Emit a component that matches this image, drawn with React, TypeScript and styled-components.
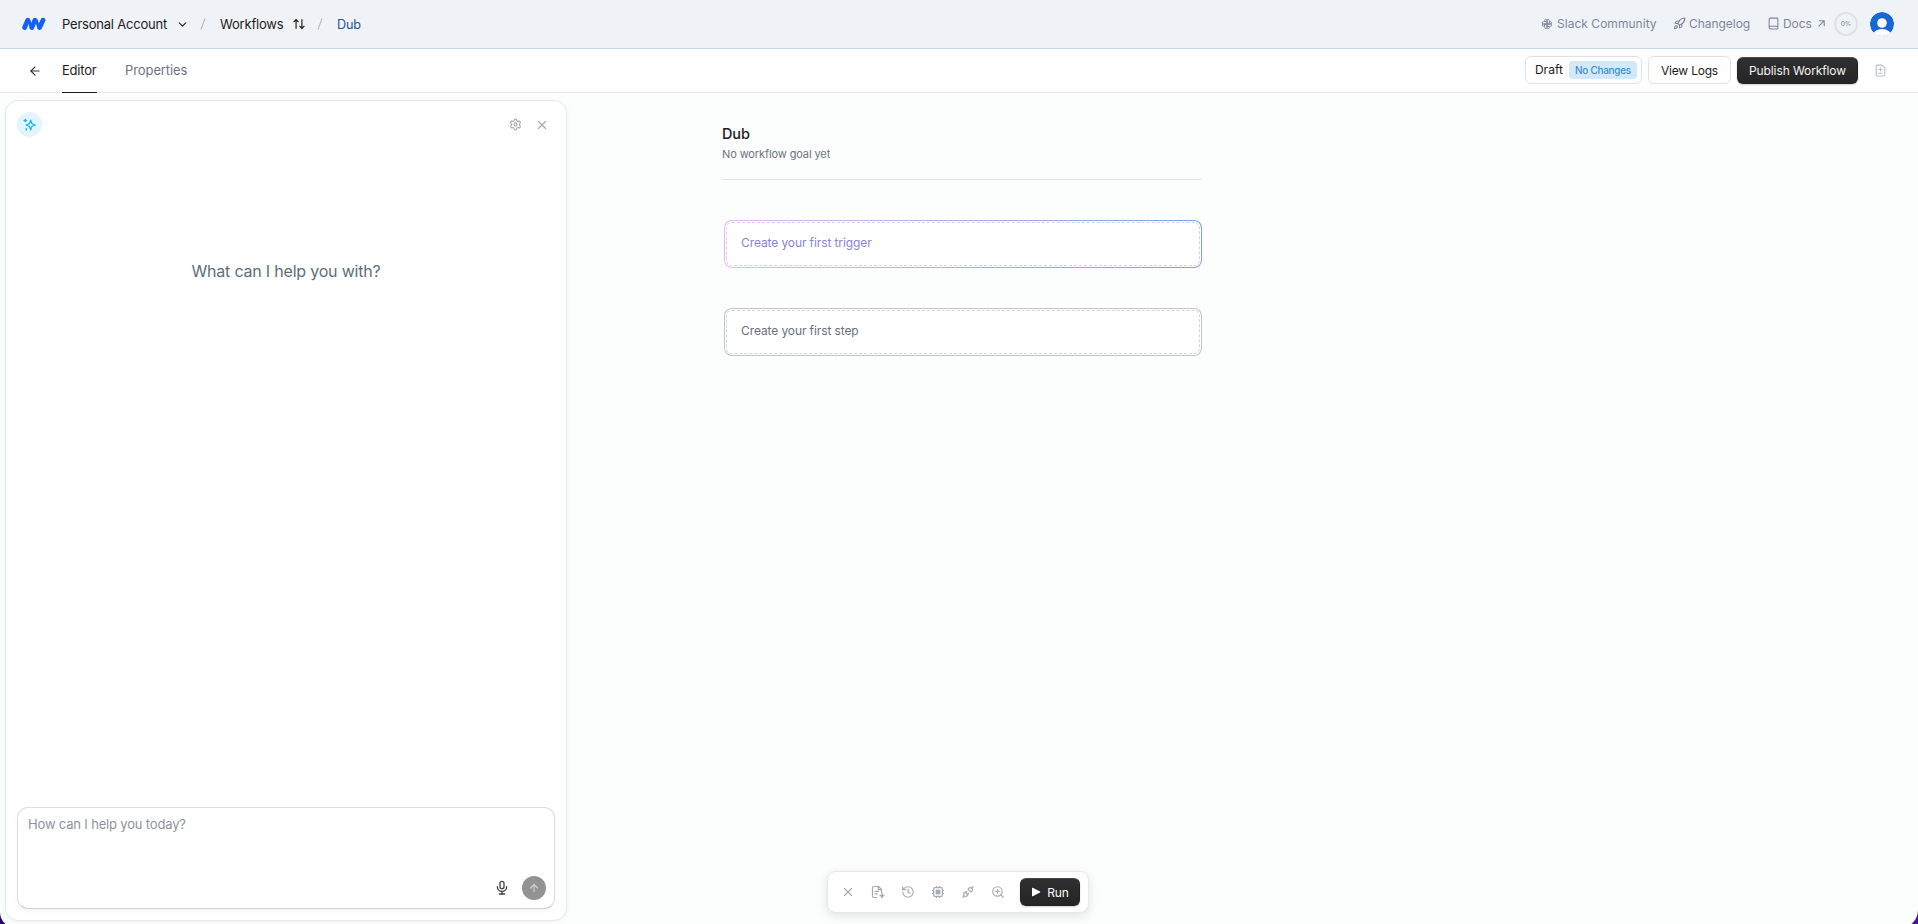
import React from "react";
import styled, { createGlobalStyle, css } from "styled-components";
import { ArrowLeft, ArrowUp, Book, ChevronDown, FileDiff, History, Rocket, Settings, X, ZoomIn } from "lucide-react";
import { RiArrowRightUpLine, RiArrowUpDownLine } from "react-icons/ri";
import { TbBrandSlack, TbMicrophone, TbPlugConnected } from "react-icons/tb";

const GlobalStyle = createGlobalStyle`
  * { box-sizing: border-box; }
  body { margin: 0; overflow: hidden; font-family: Inter, "Liberation Sans", sans-serif; color: #1c1c1c; }
  svg { display: block; flex: none; }
  button { font: inherit; color: inherit; letter-spacing: inherit; }
`;

const Screen = styled.div`
  height: 924px;
  overflow: hidden;
  background: linear-gradient(90deg, #27036c, #43109f);
`;

const Shell = styled.div`
  display: flex;
  flex-direction: column;
  height: 928px;
  background: #fbfefd;
  border-radius: 0 0 18px 16px;
  overflow: hidden;
`;

const Label = styled.span<{ $size?: number; $track?: number; $color?: string; $weight?: number }>`
  font-size: ${(p) => p.$size ?? 12}px;
  letter-spacing: ${(p) => p.$track ?? 0}px;
  color: ${(p) => p.$color ?? "#1c1c1c"};
  font-weight: ${(p) => p.$weight ?? 400};
  white-space: nowrap;
`;

const TopBar = styled.header`
  display: flex;
  align-items: center;
  justify-content: space-between;
  height: 49px;
  flex: none;
  padding: 0 24px 0 22px;
  background: #eff2f6;
  border-bottom: 1px solid #c7d5e6;
`;

const Crumbs = styled.nav`
  display: flex;
  align-items: center;
  height: 100%;
`;

const Logo = styled.svg`
  margin-right: 16px;
`;

const CrumbLink = styled.a<{ $width: number }>`
  display: flex;
  align-items: center;
  justify-content: space-between;
  width: ${(p) => p.$width}px;
`;

const Slash = styled.svg`
  margin: 0 14px 0 11px;
`;

const TopLinks = styled.div`
  display: flex;
  align-items: center;
  padding-bottom: 1px;
`;

const TopLink = styled.a<{ $width: number }>`
  display: flex;
  align-items: center;
  gap: 3px;
  width: ${(p) => p.$width}px;
  color: #7e8799;
`;

const Progress = styled.div`
  display: grid;
  place-items: center;
  width: 24px;
  height: 24px;
  margin-right: 12px;
  border: 2px solid #dfe2e5;
  border-radius: 50%;
`;

const SubBar = styled.div`
  display: flex;
  justify-content: space-between;
  height: 44px;
  flex: none;
  padding: 0 31px 0 28px;
  background: #fff;
  border-bottom: 1px solid #e5e7e9;
`;

const Tabs = styled.div`
  display: flex;
  align-items: center;
  height: 44px;
  color: #333;
`;

const Tab = styled.a<{ $active?: boolean }>`
  display: flex;
  align-items: center;
  height: 44px;
  margin-left: ${(p) => (p.$active ? 20 : 28.5)}px;
  padding-bottom: 2px;
  border-bottom: 1px solid ${(p) => (p.$active ? "#1c1c1c" : "transparent")};
`;

const Actions = styled.div`
  display: flex;
  align-items: center;
  height: 42px;
  gap: 6px;
`;

const darkSurface = css`
  background: linear-gradient(#303030, #252525);
  border: 1px solid #222;
  border-top-color: #484848;
  box-shadow: 0 1px 2px rgba(20, 20, 40, 0.2);
`;

const ActionButton = styled.button<{ $width: number; $height?: number; $dark?: boolean }>`
  display: flex;
  align-items: center;
  justify-content: center;
  gap: 6px;
  width: ${(p) => p.$width}px;
  height: ${(p) => p.$height ?? 28}px;
  padding: 0;
  background: #fff;
  border: 1px solid #e0e2e5;
  border-radius: 6px;
  ${(p) => p.$dark && darkSurface}
`;

const DraftButton = styled(ActionButton)`
  justify-content: flex-end;
  padding: 0 4px 1px 0;
`;

const Badge = styled.span`
  display: flex;
  align-items: center;
  justify-content: center;
  width: 68px;
  height: 18px;
  background: #d3e9f9;
  border-radius: 4px;
`;

const FileAction = styled.span`
  margin-left: 10px;
  color: #b9bec5;
`;

const Body = styled.main`
  display: flex;
  flex: 1;
  padding: 7px 0 7px 5px;
`;

const Assistant = styled.aside`
  display: flex;
  flex-direction: column;
  width: 562px;
  padding: 11px;
  background: #fff;
  border: 1px solid #e5e8ea;
  border-radius: 13px;
  box-shadow: 0 1px 5px rgba(30, 50, 60, 0.05);
`;

const AssistantHead = styled.div`
  display: flex;
  align-items: center;
  gap: 13px;
  padding-right: 6px;
  color: #a3a9b2;
`;

const SparkBadge = styled.div`
  display: grid;
  place-items: center;
  width: 25px;
  height: 25px;
  margin-right: auto;
  background: #e3f4fc;
  border-radius: 50%;
`;

const Greeting = styled.div`
  flex: 1;
  padding-top: 124px;
  text-align: center;
`;

const Composer = styled.div`
  display: flex;
  flex-direction: column;
  justify-content: space-between;
  height: 102px;
  padding: 8px 8px 8px 10px;
  border: 1px solid #dcdee1;
  border-bottom-color: #cdcfd1;
  border-radius: 11px;
  box-shadow: 0 2px 4px rgba(20, 30, 40, 0.05);
`;

const ComposerActions = styled.div`
  display: flex;
  align-items: center;
  justify-content: flex-end;
  gap: 12px;
  color: #444;
`;

const Send = styled.button`
  display: grid;
  place-items: center;
  width: 24px;
  height: 24px;
  padding: 0;
  border: 0;
  border-radius: 50%;
  background: #939393;
  color: #d0d0d0;
`;

const Canvas = styled.section`
  display: flex;
  flex-direction: column;
  width: 480px;
  margin-left: 155px;
`;

const FlowHeader = styled.div`
  display: flex;
  flex-direction: column;
  gap: 5px;
  height: 80px;
  padding-top: 25px;
  border-bottom: 1px solid #e1e4e5;
`;

const StepCard = styled.div<{ $gradient?: boolean }>`
  height: 48px;
  margin: 40px 0 0 2px;
  padding: 1px;
  border-radius: 8px;
  border: 1px solid transparent;
  background: linear-gradient(#fff, #fff) padding-box,
    ${(p) => (p.$gradient ? "linear-gradient(90deg, #e6b8fb, #aaa9e9 50%, #78a3dc)" : "linear-gradient(#bfc4cd, #bfc4cd)")} border-box;
`;

const StepInner = styled.div`
  height: 44px;
  padding: 12px 0 0 14px;
  line-height: 16px;
  border: 1px dashed #d2cff2;
  border-radius: 6px;
  display: flex;
`;

const Toolbar = styled.div`
  display: flex;
  align-items: center;
  align-self: flex-start;
  width: 262px;
  height: 42px;
  margin: auto 0 8px 105px;
  padding: 0 8px 0 13px;
  background: #fff;
  border: 1px solid #e5e8ea;
  border-radius: 9px;
  box-shadow: 0 3px 10px rgba(30, 40, 50, 0.13);
`;

const Tools = styled.div`
  display: flex;
  gap: 16px;
  margin-right: auto;
  color: #a5abb3;
`;

const Tool = styled.span`
  display: grid;
  place-items: center;
  width: 14px;
  height: 14px;
`;

const Mark = () => (
  <Logo width="24" height="14" viewBox="0 0 24 14" stroke="#1460fb" strokeLinecap="round" strokeLinejoin="round" fill="none">
    <path d="M2.6 10.6 5.7 3.3M9.8 10.6 12.9 3.3M17.6 10.6 21 3.3" strokeWidth="4.8" />
    <path d="M7 3.4 9 10.2M14.3 3.4 16.8 10.2" strokeWidth="3" />
  </Logo>
);

const Divider = () => (
  <Slash width="6" height="14" viewBox="0 0 6 14" fill="none" stroke="#a9b0ba" strokeWidth="1">
    <path d="M1 12.5 5 1.5" />
  </Slash>
);

const Avatar = () => (
  <svg width="24" height="24" viewBox="0 0 24 24">
    <clipPath id="disc"><circle cx="12" cy="12" r="12" /></clipPath>
    <g clipPath="url(#disc)">
      <circle cx="12" cy="12" r="12" fill="#1767d5" />
      <circle cx="12" cy="11" r="4.8" fill="#fff" />
      <ellipse cx="12" cy="24" rx="9.5" ry="7" fill="#fff" />
    </g>
  </svg>
);

const Sparkle = () => (
  <svg width="14" height="14" viewBox="0 0 14 14" fill="none" stroke="#1cb8f3" strokeWidth="1.3" strokeLinejoin="round" strokeLinecap="round">
    <path d="M7.7 2.2 8.9 5.6 12.3 7 8.9 8.4 7.7 11.8 6.4 8.4 3.1 7 6.4 5.6Z" />
    <path d="M2.4 1.4v2.4M1.2 2.6h2.4M3.2 10.7v1.4" strokeWidth="1.5" />
  </svg>
);

const NoteSpark = () => (
  <svg width="14" height="14" viewBox="0 0 14 14" fill="none" stroke="currentColor" strokeWidth="1.2" strokeLinejoin="round" strokeLinecap="round">
    <path d="M6 12.5H3A1.5 1.5 0 0 1 1.5 11V3A1.5 1.5 0 0 1 3 1.5h4.5l3 3v3M7.3 1.7v3h3M4 6.3h3.5M4 8.8h2.5" />
    <path d="M11 8.2l.8 1.7 1.7.8-1.7.8-.8 1.7-.8-1.7-1.7-.8 1.7-.8Z" fill="currentColor" strokeWidth=".6" />
  </svg>
);

const Chip = () => (
  <svg width="14" height="14" viewBox="0 0 14 14" fill="none" stroke="currentColor" strokeWidth="1.2" strokeLinejoin="round">
    <rect x="2.6" y="2.6" width="8.8" height="8.8" rx="1.4" />
    <rect x="5" y="5" width="4" height="4" rx=".5" fill="currentColor" strokeWidth=".8" />
    <path d="M5.5 1v1.6M8.5 1v1.6M5.5 11.4V13M8.5 11.4V13M1 5.5h1.6M1 8.5h1.6M11.4 5.5H13M11.4 8.5H13" />
  </svg>
);

export default function App() {
  return (
    <Screen>
      <GlobalStyle />
      <Shell>
        <TopBar>
          <Crumbs>
            <Mark />
            <CrumbLink $width={127}>
              <Label $size={13} $track={-0.21}>Personal Account</Label>
              <ChevronDown size={13} strokeWidth={2} />
            </CrumbLink>
            <Divider />
            <CrumbLink $width={86}>
              <Label $size={13} $track={-0.19}>Workflows</Label>
              <RiArrowUpDownLine size={14} />
            </CrumbLink>
            <Divider />
            <Label $size={12.7} $track={-0.25} $color="#25549c">Dub</Label>
          </Crumbs>
          <TopLinks>
            <TopLink $width={133}>
              <TbBrandSlack size={14} strokeWidth={1.6} />
              <Label $track={0.03} $color="#7e8799">Slack Community</Label>
            </TopLink>
            <TopLink $width={94}>
              <Rocket size={13} strokeWidth={2} />
              <Label $track={-0.04} $color="#7e8799">Changelog</Label>
            </TopLink>
            <TopLink $width={67}>
              <Book size={13} strokeWidth={2} />
              <Label $track={-0.1} $color="#7e8799">Docs</Label>
              <RiArrowRightUpLine size={13} />
            </TopLink>
            <Progress>
              <Label $size={6.5} $weight={500} $color="#8f949b">0%</Label>
            </Progress>
            <Avatar />
          </TopLinks>
        </TopBar>
        <SubBar>
          <Tabs>
            <ArrowLeft size={14} strokeWidth={2} />
            <Tab $active><Label $size={13} $track={-0.2}>Editor</Label></Tab>
            <Tab><Label $size={13} $track={-0.1} $color="#6b7482">Properties</Label></Tab>
          </Tabs>
          <Actions>
            <DraftButton $width={117}>
              <Label $track={0.05}>Draft</Label>
              <Badge><Label $size={10} $track={-0.3} $weight={500} $color="#3b8fcc">No Changes</Label></Badge>
            </DraftButton>
            <ActionButton $width={83}><Label $track={-0.2}>View Logs</Label></ActionButton>
            <ActionButton $width={121} $height={27} $dark><Label $track={-0.1} $color="#f4f4f4">Publish Workflow</Label></ActionButton>
            <FileAction><FileDiff size={13} strokeWidth={2} /></FileAction>
          </Actions>
        </SubBar>
        <Body>
          <Assistant>
            <AssistantHead>
              <SparkBadge><Sparkle /></SparkBadge>
              <Settings size={13} strokeWidth={2} />
              <X size={14} strokeWidth={2} />
            </AssistantHead>
            <Greeting>
              <Label $size={16} $track={-0.2} $color="#5c6e7b">What can I help you with?</Label>
            </Greeting>
            <Composer>
              <Label $size={13} $track={-0.17} $color="#8b939e">How can I help you today?</Label>
              <ComposerActions>
                <TbMicrophone size={16} strokeWidth={2} />
                <Send><ArrowUp size={12} strokeWidth={2.4} /></Send>
              </ComposerActions>
            </Composer>
          </Assistant>
          <Canvas>
            <FlowHeader>
              <Label $size={14.5} $track={-0.1} $weight={500}>Dub</Label>
              <Label $size={11} $track={-0.11} $color="#6c7480">No workflow goal yet</Label>
            </FlowHeader>
            <StepCard $gradient>
              <StepInner><Label $track={-0.1} $color="#8684d8">Create your first trigger</Label></StepInner>
            </StepCard>
            <StepCard>
              <StepInner><Label $track={-0.1} $color="#67707e">Create your first step</Label></StepInner>
            </StepCard>
            <Toolbar>
              <Tools>
                <Tool><X size={14} strokeWidth={2} /></Tool>
                <Tool><NoteSpark /></Tool>
                <Tool><History size={14} strokeWidth={2} /></Tool>
                <Tool><Chip /></Tool>
                <Tool><TbPlugConnected size={14} strokeWidth={2} /></Tool>
                <Tool><ZoomIn size={14} strokeWidth={2} /></Tool>
              </Tools>
              <ActionButton $width={60} $dark>
                <svg width="10" height="10" viewBox="0 0 10 10" fill="#fff"><path d="M1 1.2Q1 .4 1.8.8L9 4.5q.8.5 0 1L1.8 9.2Q1 9.6 1 8.8Z" /></svg>
                <Label $track={-0.1} $color="#fff">Run</Label>
              </ActionButton>
            </Toolbar>
          </Canvas>
        </Body>
      </Shell>
    </Screen>
  );
}
